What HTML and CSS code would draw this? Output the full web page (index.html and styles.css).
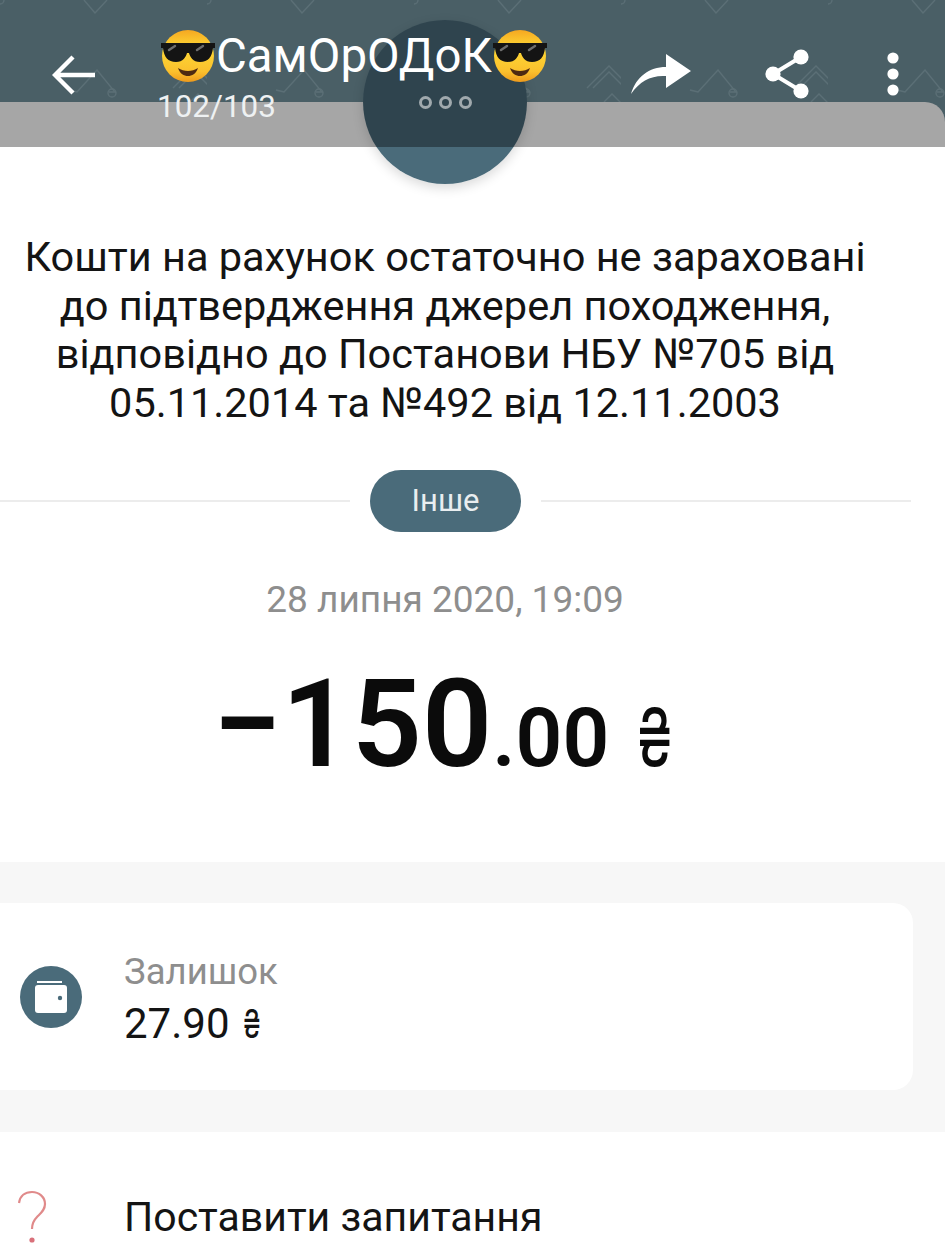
FILE: index.html
```html
<!DOCTYPE html>
<html lang="uk">
<head>
    <meta charset="UTF-8">
    <meta name="viewport" content="width=device-width, initial-scale=1.0">
    <title>Виписка</title>
    <link rel="stylesheet" href="styles.css">
</head>
<body>
    <svg class="defs" width="0" height="0">
        <defs>
            <linearGradient id="face" x1="0" y1="0" x2="0" y2="1">
                <stop offset="0" stop-color="#f6a821"/>
                <stop offset="0.35" stop-color="#fdd835"/>
                <stop offset="0.8" stop-color="#fbc02d"/>
                <stop offset="1" stop-color="#ee9a1c"/>
            </linearGradient>
            <symbol id="cool" viewBox="0 0 56 56">
                <circle cx="28" cy="28" r="26" fill="url(#face)"/>
                <path d="M1 15h54v5h-2c-1 9-5 14-13 14-7 0-10-5-11-9h-2c-1 4-4 9-11 9-8 0-12-5-13-14H1z" fill="#141414"/>
                <path d="M9 22l6-4M37 22l6-4" stroke="#6d6d6d" stroke-width="2.4" stroke-linecap="round"/>
                <path d="M18 40c6 4 14 4 20 0-2 6-6 8-10 8s-8-2-10-8z" fill="#4e2a12"/>
            </symbol>
        </defs>
    </svg>

    <header class="topbar">
        <svg class="wallpaper" width="945" height="102">
            <defs>
                <pattern id="carts" width="207" height="102" patternUnits="userSpaceOnUse">
                    <g fill="none" stroke="#5b6f76" stroke-width="1.3">
                        <path d="M84 0l11 13 12-13"/>
                        <path d="M69 90l8 2 20-22 18 22h-6"/>
                        <circle cx="112" cy="93" r="4"/>
                        <path d="M173 88l22-22 24 24-12 12M179 88l16-16 18 18M190 102l8-8 8 8"/>
                        <circle cx="0" cy="0" r="4"/>
                    </g>
                </pattern>
            </defs>
            <rect width="945" height="102" fill="url(#carts)"/>
        </svg>
        <div class="bubble"><span class="ring"></span><span class="ring"></span><span class="ring"></span></div>

        <div class="toolbar">
            <svg class="back" width="44" height="40" viewBox="0 0 44 40">
                <path d="M43 20H4M21 2L3 20l18 18" fill="none" stroke="#fff" stroke-width="4.4"/>
            </svg>
            <div class="title-wrap">
                <div class="title">
                    <svg class="emoji" width="56" height="56"><use href="#cool"/></svg>
                    <span>СамОрОДоК</span>
                    <svg class="emoji" width="56" height="56"><use href="#cool"/></svg>
                </div>
                <div class="counter">102/103</div>
            </div>
            <div class="actions">
                <svg width="60" height="42" viewBox="0 0 60 42">
                    <path d="M0 41C5 24 18 14 35 14V1l25 17-25 17V23C20 22 9 28 0 41z" fill="#fff"/>
                </svg>
                <svg width="46" height="50" viewBox="0 0 46 50">
                    <path d="M36 8L8 25l28 17" fill="none" stroke="#fff" stroke-width="4"/>
                    <circle cx="36" cy="8" r="7.6" fill="#fff"/>
                    <circle cx="8" cy="25" r="7.6" fill="#fff"/>
                    <circle cx="36" cy="42" r="7.6" fill="#fff"/>
                </svg>
                <svg width="16" height="44" viewBox="0 0 16 44">
                    <circle cx="8" cy="6" r="5.6" fill="#fff"/>
                    <circle cx="8" cy="22" r="5.6" fill="#fff"/>
                    <circle cx="8" cy="38" r="5.6" fill="#fff"/>
                </svg>
            </div>
        </div>
    </header>

    <main>
        <section class="summary">
            <p class="note">Кошти на рахунок остаточно не зараховані<br>до підтвердження джерел походження,<br>відповідно до Постанови НБУ №705 від<br>05.11.2014 та №492 від 12.11.2003</p>

            <div class="divider">
                <span class="line line-left"></span>
                <span class="pill">Інше</span>
                <span class="line line-right"></span>
            </div>

            <div class="date">28 липня 2020, 19:09</div>
            <div class="amount"><span class="whole">−150</span><span class="cents">.00</span><span class="currency">₴</span></div>
        </section>

        <section class="balance-wrap">
            <div class="balance-card">
                <span class="balance-icon">
                    <svg width="36" height="36" viewBox="0 0 36 36">
                        <path d="M4 3h25" stroke="#fff" stroke-width="2" fill="none"/>
                        <rect x="2" y="6" width="32" height="28" rx="3" fill="#fff"/>
                        <circle cx="27" cy="19" r="2.2" fill="#4a6b7a"/>
                    </svg>
                </span>
                <div>
                    <div class="balance-label">Залишок</div>
                    <div class="balance-value">27.90 <span class="hryvnia">₴</span></div>
                </div>
            </div>
        </section>

        <section class="ask-row">
            <svg class="ask-icon" width="30" height="54" viewBox="0 0 30 54">
                <path d="M2 13C3 6 8 2 15 2s13 5 13 12c0 6-4 9-8 13-3 3-5 6-5 12" fill="none" stroke="#e08a8a" stroke-width="2.2"/>
                <circle cx="15" cy="50" r="2.6" fill="#d9707a"/>
            </svg>
            <span class="ask-text">Поставити запитання</span>
        </section>
    </main>
</body>
</html>
```

FILE: styles.css
```css
* {
    box-sizing: border-box;
}

html, body {
    margin: 0;
    height: 1258px;
    overflow: hidden;
}

body {
    font-family: 'Roboto', 'Liberation Sans', sans-serif;
    background-color: #fff;
    color: #141414;
}

.defs {
    position: absolute;
}

.topbar {
    position: relative;
    height: 147px;
    background-color: #4a5f66;
}

.topbar::after {
    content: '';
    position: absolute;
    left: 0;
    right: 0;
    bottom: 0;
    height: 45px;
    background-color: #a6a6a6;
    border-top-right-radius: 20px;
}

.wallpaper {
    position: absolute;
    top: 0;
    left: 0;
}

.bubble {
    position: absolute;
    z-index: 1;
    left: 363px;
    top: 20px;
    width: 164px;
    height: 164px;
    border-radius: 50%;
    background: linear-gradient(#2f444e 127px, #4a6b7a 127px);
    box-shadow: 0 4px 12px rgba(0, 0, 0, 0.15);
    display: flex;
    justify-content: center;
    gap: 7px;
    padding-top: 76px;
}

.ring {
    width: 13px;
    height: 13px;
    border: 3px solid #a0a9ad;
    border-radius: 50%;
}

.toolbar {
    position: relative;
    z-index: 2;
    display: flex;
    align-items: flex-start;
    height: 147px;
    padding: 28px 0 0 52px;
    color: #fff;
}

.back {
    margin-top: 27px;
}

.title-wrap {
    margin-left: 64px;
}

.title {
    display: flex;
    align-items: center;
    font-size: 47.4px;
    line-height: 54px;
}

.emoji {
    flex: none;
}

.counter {
    font-size: 31.4px;
    line-height: 36px;
    color: #eef1f2;
    margin: 5px 0 0 -3px;
}

.actions {
    display: flex;
    align-items: center;
    margin-left: 83px;
    margin-top: 21px;
    gap: 74px;
}

.summary {
    width: 890px;
    height: 715px;
    padding-top: 86px;
    text-align: center;
}

.note {
    margin: 0;
    font-size: 41.5px;
    line-height: 48.7px;
}

.divider {
    display: flex;
    align-items: center;
    width: 911px;
    margin-top: 42px;
}

.line {
    height: 2px;
    background-color: #ececec;
}

.line-left {
    width: 350px;
}

.line-right {
    flex: 1;
}

.pill {
    width: 151px;
    height: 62px;
    margin: 0 20px;
    border-radius: 31px;
    background-color: #4a6b7a;
    color: #e9eef0;
    font-size: 31px;
    line-height: 62px;
}

.date {
    margin-top: 48px;
    font-size: 37px;
    line-height: 40px;
    color: #8e8e8e;
}

.amount {
    display: flex;
    justify-content: center;
    align-items: baseline;
    margin-top: 34px;
    font-weight: 600;
    color: #0b0b0b;
    line-height: 140px;
}

.whole {
    font-size: 123px;
}

.cents {
    font-size: 82px;
}

.currency {
    font-family: 'Inter', sans-serif;
    font-size: 80px;
    font-weight: 400;
    width: 34px;
    margin-left: 28px;
    margin-right: 6px;
    text-align: left;
    transform: scaleX(0.7);
    transform-origin: left;
}

.hryvnia {
    display: inline-block;
    width: 17px;
    margin-left: 3px;
    font-family: 'Inter', sans-serif;
    font-size: 40px;
    transform: scaleX(0.7);
    transform-origin: left;
}

.balance-wrap {
    background-color: #f7f7f7;
    padding: 41px 0 42px;
}

.balance-card {
    width: 913px;
    height: 187px;
    background-color: #fff;
    border-radius: 0 20px 20px 0;
    display: flex;
    align-items: center;
    padding-left: 20px;
}

.balance-icon {
    display: flex;
    align-items: center;
    justify-content: center;
    width: 62px;
    height: 62px;
    border-radius: 50%;
    background-color: #4a6b7a;
    margin-right: 42px;
}

.balance-label {
    margin-top: 5px;
    font-size: 36.5px;
    line-height: 44px;
    color: #8e8e8e;
}

.balance-value {
    margin-top: 5px;
    font-size: 42px;
    line-height: 50px;
}

.ask-row {
    display: flex;
    align-items: center;
    height: 170px;
    padding-left: 17px;
}

.ask-icon {
    flex: none;
    margin-right: 77px;
}

.ask-text {
    font-size: 41px;
}
```
